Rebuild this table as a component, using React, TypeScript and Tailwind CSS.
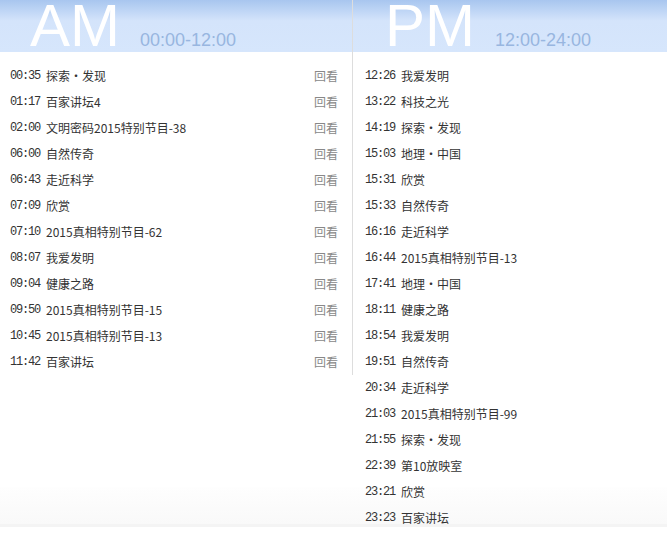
const am = [
  ['00:35', '探索·发现'],
  ['01:17', '百家讲坛4'],
  ['02:00', '文明密码2015特别节目-38'],
  ['06:00', '自然传奇'],
  ['06:43', '走近科学'],
  ['07:09', '欣赏'],
  ['07:10', '2015真相特别节目-62'],
  ['08:07', '我爱发明'],
  ['09:04', '健康之路'],
  ['09:50', '2015真相特别节目-15'],
  ['10:45', '2015真相特别节目-13'],
  ['11:42', '百家讲坛'],
];

const pm = [
  ['12:26', '我爱发明'],
  ['13:22', '科技之光'],
  ['14:19', '探索·发现'],
  ['15:03', '地理·中国'],
  ['15:31', '欣赏'],
  ['15:33', '自然传奇'],
  ['16:16', '走近科学'],
  ['16:44', '2015真相特别节目-13'],
  ['17:41', '地理·中国'],
  ['18:11', '健康之路'],
  ['18:54', '我爱发明'],
  ['19:51', '自然传奇'],
  ['20:34', '走近科学'],
  ['21:03', '2015真相特别节目-99'],
  ['21:55', '探索·发现'],
  ['22:39', '第10放映室'],
  ['23:21', '欣赏'],
  ['23:23', '百家讲坛'],
];

const Header = ({ big, range, indent }: { big: string; range: string; indent: string }) => (
  <div className="h-[52px] overflow-hidden bg-gradient-to-b from-[#a8c6ef] via-[#d4e4fb] via-40% to-[#d6e6fc]">
    <div className={`flex items-baseline ${indent} font-['Liberation_Sans',Arial,sans-serif]`}>
      <span className="text-[60px] leading-[52px] text-white">{big}</span>
      <span className="ml-[20px] text-[18px] leading-[20px] text-[#98b6e0]">{range}</span>
    </div>
  </div>
);

const Row = ({ time, title, replay, pad }: { time: string; title: string; replay?: boolean; pad: string }) => (
  <li className={`flex h-[26px] items-center ${pad}`}>
    <span className="w-[36px] shrink-0 font-['Liberation_Mono',monospace] text-[12px] tracking-[-1.2px] text-[#333]">{time}</span>
    <span className="flex-1 truncate text-[12px] text-[#333]">{title}</span>
    {replay && <span className="text-[12px] text-[#888]">回看</span>}
  </li>
);

export default function App() {
  return (
    <div className="relative h-[540px] w-[667px] overflow-hidden bg-white font-['Noto_Sans_CJK_SC','Noto_Sans',sans-serif]">
      <div className="pointer-events-none absolute inset-x-0 top-[487px] h-[40px] border-b-[3px] border-[#f4f4f4] bg-gradient-to-b from-[#fefefe] to-[#f9f9f9]" />
      <div className="relative flex items-start">
        <div className="w-[353px] shrink-0 border-r border-[#dddddd]">
          <Header big="AM" range="00:00-12:00" indent="pl-[30px]" />
          <ul className="mt-[11px]">
            {am.map(([t, n]) => (
              <Row key={t} time={t} title={n} replay pad="pl-[10px] pr-[14px]" />
            ))}
          </ul>
        </div>
        <div className="flex-1">
          <Header big="PM" range="12:00-24:00" indent="pl-[32px]" />
          <ul className="mt-[11px]">
            {pm.map(([t, n]) => (
              <Row key={t} time={t} title={n} pad="pl-[12px]" />
            ))}
          </ul>
        </div>
      </div>
    </div>
  );
}
